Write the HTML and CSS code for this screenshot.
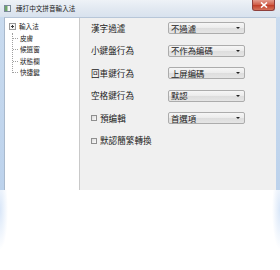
FILE: index.html
```html
<!DOCTYPE html>
<html>
<head>
<meta charset="utf-8">
<link rel="stylesheet" href="styles.css">
</head>
<body>
<div class="window">
  <div class="titlebar">
    <svg class="app-icon" width="7" height="7" viewBox="0 0 7 7">
      <rect x="0.5" y="0.5" width="6" height="6" fill="#f4f6f8" stroke="#7b8a99"/>
      <rect x="1" y="1" width="2.5" height="5" fill="#6fa56a"/>
    </svg>
    <span class="title">速打中文拼音輸入法</span>
    <div class="close">
      <svg width="8" height="6" viewBox="0 0 8 6">
        <path d="M1 0.5 L7 5.5 M7 0.5 L1 5.5" stroke="#fff" stroke-width="1.6"/>
      </svg>
    </div>
  </div>
  <div class="client">
    <div class="tree">
      <div class="node root">
        <svg class="expander" width="7" height="7" viewBox="0 0 7 7">
          <rect x="0.5" y="0.5" width="6" height="6" fill="#f7f7f7" stroke="#9a9a9a"/>
          <path d="M2 3.5 H5 M3.5 2 V5" stroke="#3c3c3c" stroke-width="1"/>
        </svg>
        <span>輸入法</span>
      </div>
      <div class="children">
        <div class="node child"><span class="hline"></span><span>皮膚</span></div>
        <div class="node child"><span class="hline"></span><span>候選窗</span></div>
        <div class="node child"><span class="hline"></span><span>狀態欄</span></div>
        <div class="node child"><span class="hline"></span><span>快捷鍵</span></div>
      </div>
    </div>
    <div class="settings">
      <div class="row"><span class="label">漢字過濾</span><div class="combo"><span>不過濾</span><i class="arrow"></i></div></div>
      <div class="row"><span class="label">小鍵盤行為</span><div class="combo"><span>不作為编碼</span><i class="arrow"></i></div></div>
      <div class="row"><span class="label">回車鍵行為</span><div class="combo"><span>上屏编碼</span><i class="arrow"></i></div></div>
      <div class="row"><span class="label">空格鍵行為</span><div class="combo"><span>默認</span><i class="arrow"></i></div></div>
      <div class="row"><span class="label"><i class="check"></i>預编輯</span><div class="combo"><span>首選項</span><i class="arrow"></i></div></div>
      <div class="row"><span class="label"><i class="check"></i>默認簡繁轉換</span></div>
    </div>
  </div>
</div>
<div class="reflection"></div>
</body>
</html>
```
FILE: styles.css
```css
html, body {
  margin: 0;
  padding: 0;
  background: #ffffff;
  width: 280px;
  height: 270px;
  overflow: hidden;
  font-family: "Noto Sans CJK TC", "Noto Sans CJK SC", sans-serif;
}

.window {
  width: 280px;
  height: 190px;
  box-sizing: border-box;
  background: linear-gradient(to bottom, #e3eaf3 0px, #d9e3ef 17px, #c9dbef 17px, #bcd2ec 190px);
  display: flex;
  flex-direction: column;
  padding: 0 4px 0 4px;
}

.titlebar {
  height: 17px;
  display: flex;
  align-items: center;
  position: relative;
  margin: 0 -4px;
  padding: 0 4px;
  background: linear-gradient(to bottom, #eef2f7 0%, #e1e8f1 55%, #d8e2ee 100%);
}

.app-icon {
  margin-right: 5px;
}

.title {
  font-size: 6.6px;
  color: #1a1a1a;
  line-height: 1;
}

.close {
  position: absolute;
  right: 5px;
  top: 0;
  width: 23px;
  height: 11px;
  box-sizing: border-box;
  border: 1px solid #8e3f3b;
  border-top: none;
  border-radius: 0 0 3px 3px;
  background: linear-gradient(to bottom, #e49d8f 0%, #d1604b 45%, #c1402a 55%, #d5735c 100%);
  display: flex;
  align-items: center;
  justify-content: center;
}

.client {
  flex: 1;
  display: flex;
  border-top: 1px solid #b7c6d8;
  border-left: 1px solid #a9b9cc;
  background: #f0f0f0;
}

.tree {
  width: 75px;
  background: #ffffff;
  border-right: 1px solid #c9c9c9;
  padding: 3px 0 0 4px;
  box-sizing: border-box;
  font-size: 6.6px;
  color: #1a1a1a;
}

.node {
  display: flex;
  align-items: center;
  height: 11.5px;
  line-height: 1;
}

.expander {
  margin-right: 3px;
  flex: none;
}

.children {
  margin-left: 3px;
  border-left: 1px dotted #a0a0a0;
  height: 40px;
}

.child .hline {
  width: 5px;
  border-top: 1px dotted #a0a0a0;
  margin-right: 2px;
}

.settings {
  flex: 1;
  display: grid;
  grid-template-columns: 77px 77px;
  grid-auto-rows: 12px;
  row-gap: 10.5px;
  padding: 4px 0 0 11px;
  align-content: start;
}

.row {
  display: contents;
}

.label {
  font-size: 8.6px;
  color: #1a1a1a;
  display: flex;
  align-items: center;
  line-height: 1;
  white-space: nowrap;
}

.check {
  display: inline-block;
  width: 6px;
  height: 6px;
  box-sizing: border-box;
  border: 1px solid #8f8f8f;
  background: linear-gradient(135deg, #dcdcdc, #fbfbfb);
  margin-right: 3px;
}

.combo {
  height: 12px;
  box-sizing: border-box;
  border: 1px solid #acacac;
  border-radius: 2px;
  background: linear-gradient(to bottom, #f6f6f6 0%, #ebebeb 50%, #dddddd 51%, #e5e5e5 100%);
  display: flex;
  align-items: center;
  justify-content: space-between;
  padding: 0 4px 0 2px;
  font-size: 8.4px;
  color: #1a1a1a;
  line-height: 1;
  white-space: nowrap;
}

.arrow {
  width: 0;
  height: 0;
  border-left: 2px solid transparent;
  border-right: 2px solid transparent;
  border-top: 2.5px solid #222;
}

.reflection {
  height: 80px;
  background:
    radial-gradient(ellipse 8px 40px at 0px 20px, rgba(170, 200, 240, 0.45), rgba(255,255,255,0) 100%),
    radial-gradient(ellipse 8px 40px at 280px 20px, rgba(170, 200, 240, 0.45), rgba(255,255,255,0) 100%),
    #ffffff;
}
```
